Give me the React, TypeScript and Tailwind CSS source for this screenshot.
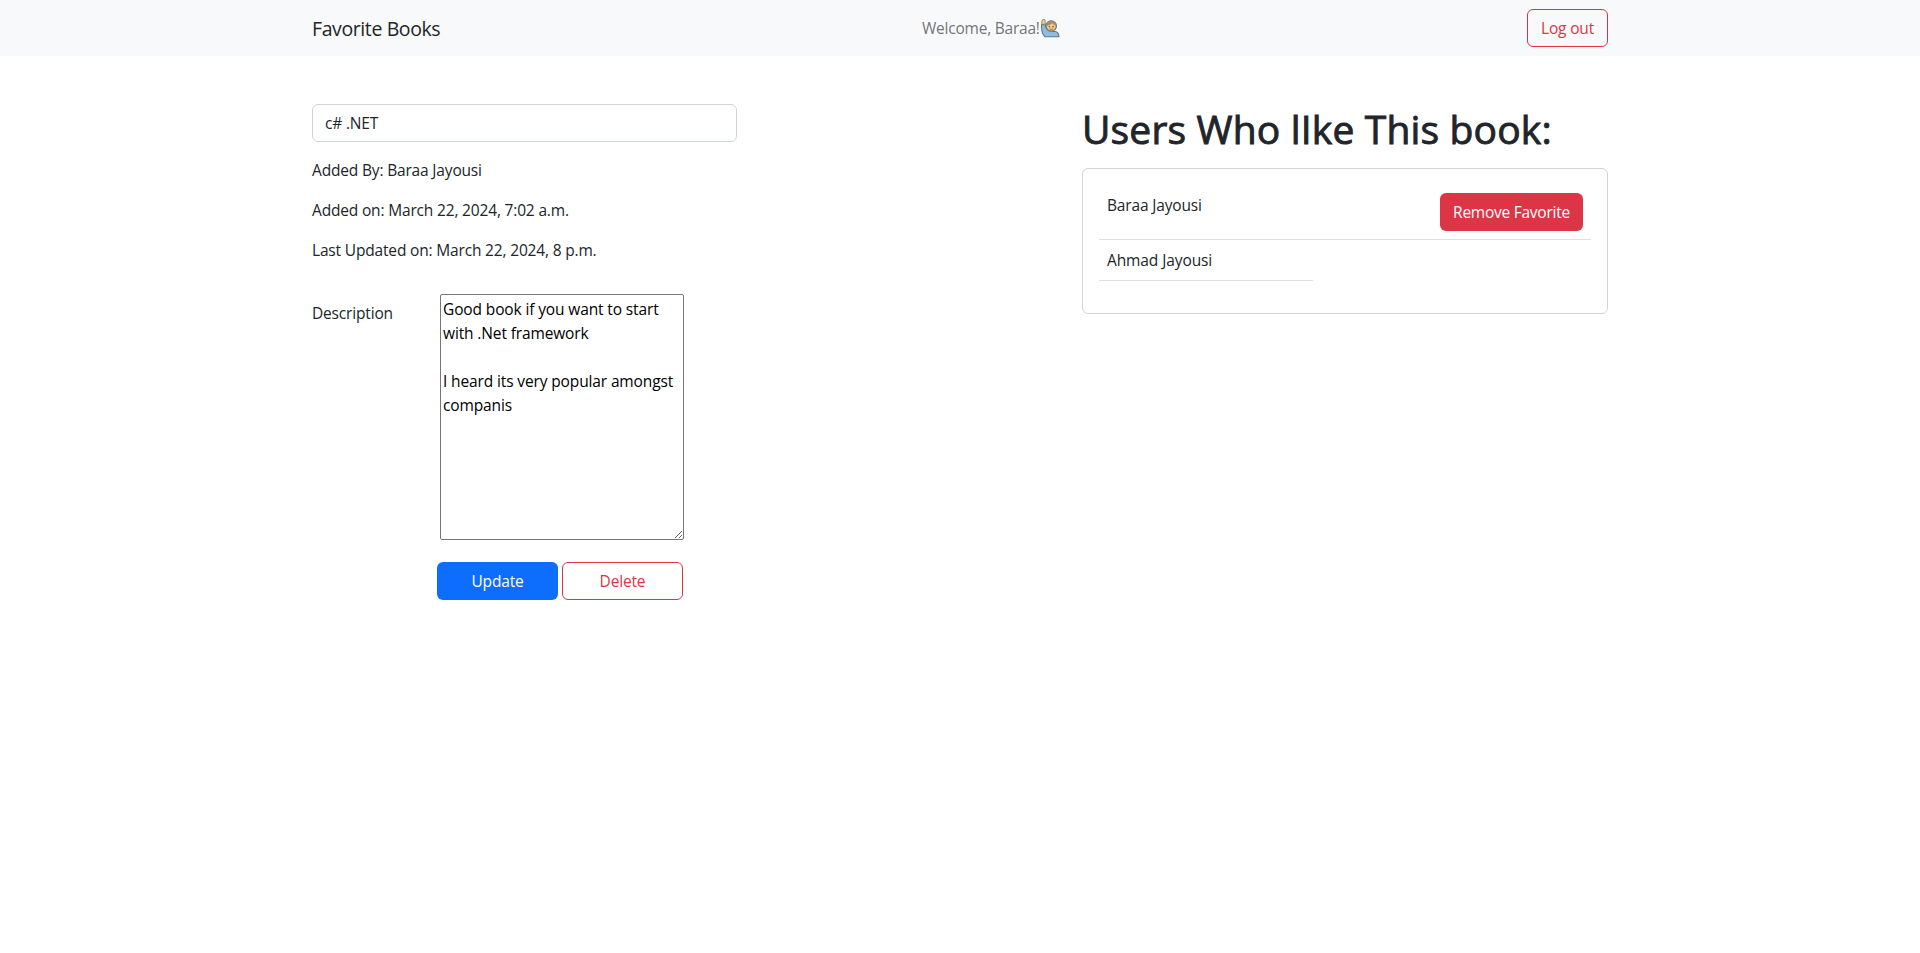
import React from "react";

const people = ["Baraa Jayousi", "Ahmad Jayousi"];

const description =
  "Good book if you want to start with .Net framework\n\nI heard its very popular amongst companis";

function WavingPerson() {
  return (
    <svg viewBox="0 0 20 20" className="block h-5 w-5 shrink-0" aria-hidden="true">
      <path
        d="M1.6 6.6L5.4 6.4Q5.6 9.6 7.2 11.4Q9 13.2 12.6 13.2Q18 13 18.8 17V18.8H5Q1.6 15.4 1.6 9.4Z"
        fill="#86bfea"
        stroke="#66727c"
        strokeWidth="1.1"
      />
      <path d="M1.8 6.4L1.9 3.2Q2 1.2 4.2 1.4Q5.4 1.6 5.2 3.4V6.4Z" fill="#f3cf83" stroke="#8b8068" strokeWidth=".9" />
      <circle cx="11.2" cy="8" r="5.2" fill="#f0cc84" stroke="#777069" strokeWidth="1.2" />
      <path d="M6.3 8Q5.8 2.6 11 2.4Q16.6 2.6 16.4 8.2Q14 7.4 12.2 5.2Q10 7.4 6.3 8Z" fill="#a08a7c" />
      <circle cx="9.4" cy="8.8" r=".8" fill="#6d5138" />
      <circle cx="13" cy="8.8" r=".8" fill="#6d5138" />
      <path d="M9.6 11Q11.2 12 12.8 11" fill="none" stroke="#8a5b35" strokeWidth=".8" />
    </svg>
  );
}

function Navbar() {
  return (
    <nav className="h-14 bg-[#f8f9fa]">
      <div className="mx-auto flex h-full w-[1296px] items-center justify-between">
        <a className="w-[143px] pt-0.5 text-[19.5px] leading-[30px] tracking-[-0.4px] whitespace-nowrap">Favorite Books</a>
        <div className="flex w-[138px] items-center justify-between text-[#212529]/65">
          <span className="tracking-[-0.22px] whitespace-nowrap">Welcome, Baraa!</span>
          <WavingPerson />
        </div>
        <button className="h-[38px] w-[81px] rounded-md border border-[#dc3545] text-[#dc3545]">Log out</button>
      </div>
    </nav>
  );
}

function BookForm() {
  return (
    <form className="w-[425px]">
      <input
        defaultValue="c# .NET"
        className="block h-[38px] w-full rounded-md border border-[#ced4da] px-3 outline-none"
      />
      <div className="flex flex-col gap-4 pt-4">
        <p>Added By: Baraa Jayousi</p>
        <p>Added on: March 22, 2024, 7:02 a.m.</p>
        <p>Last Updated on: March 22, 2024, 8 p.m.</p>
      </div>
      <div className="mt-8 flex">
        <label className="w-32 pt-[7px]">Description</label>
        <textarea
          defaultValue={description}
          className="h-[246px] w-[244px] resize rounded-[2px] border border-[#767676] p-0.5 tracking-[-0.13px] text-black outline-none"
        />
      </div>
      <div className="mt-[22px] ml-[125px] flex gap-1">
        <button type="button" className="h-[38px] w-[121px] rounded-md bg-[#0d6efd] text-white">Update</button>
        <button type="button" className="h-[38px] w-[121px] rounded-md border border-[#dc3545] text-[#dc3545]">Delete</button>
      </div>
    </form>
  );
}

function Fans() {
  return (
    <section className="w-[526px]">
      <h1 className="pt-px text-[39px] leading-[48px] font-medium tracking-[0.16px] whitespace-nowrap [-webkit-text-stroke:0.9px_#212529]">
        Users Who lIke This book:
      </h1>
      <div className="mt-[15px] h-[146px] rounded-md border border-[#d3d4d5] p-4">
        <div className="flex h-[55px] justify-between border-b border-[#dee2e6] p-2">
          <span>{people[0]}</span>
          <button className="h-[38px] w-[143px] rounded-md bg-[#dc3545] tracking-[-0.25px] text-white">Remove Favorite</button>
        </div>
        <div className="h-[41px] w-[214px] border-b border-[#dee2e6] p-2 tracking-[-0.1px]">{people[1]}</div>
      </div>
    </section>
  );
}

export default function App() {
  return (
    <div className="min-h-[953px] bg-white font-['Open_Sans','Noto_Sans',sans-serif] text-[15.5px] leading-6 tracking-[-0.17px] text-[#212529]">
      <Navbar />
      <main className="mx-auto flex w-[1296px] justify-between pt-12">
        <BookForm />
        <Fans />
      </main>
    </div>
  );
}
